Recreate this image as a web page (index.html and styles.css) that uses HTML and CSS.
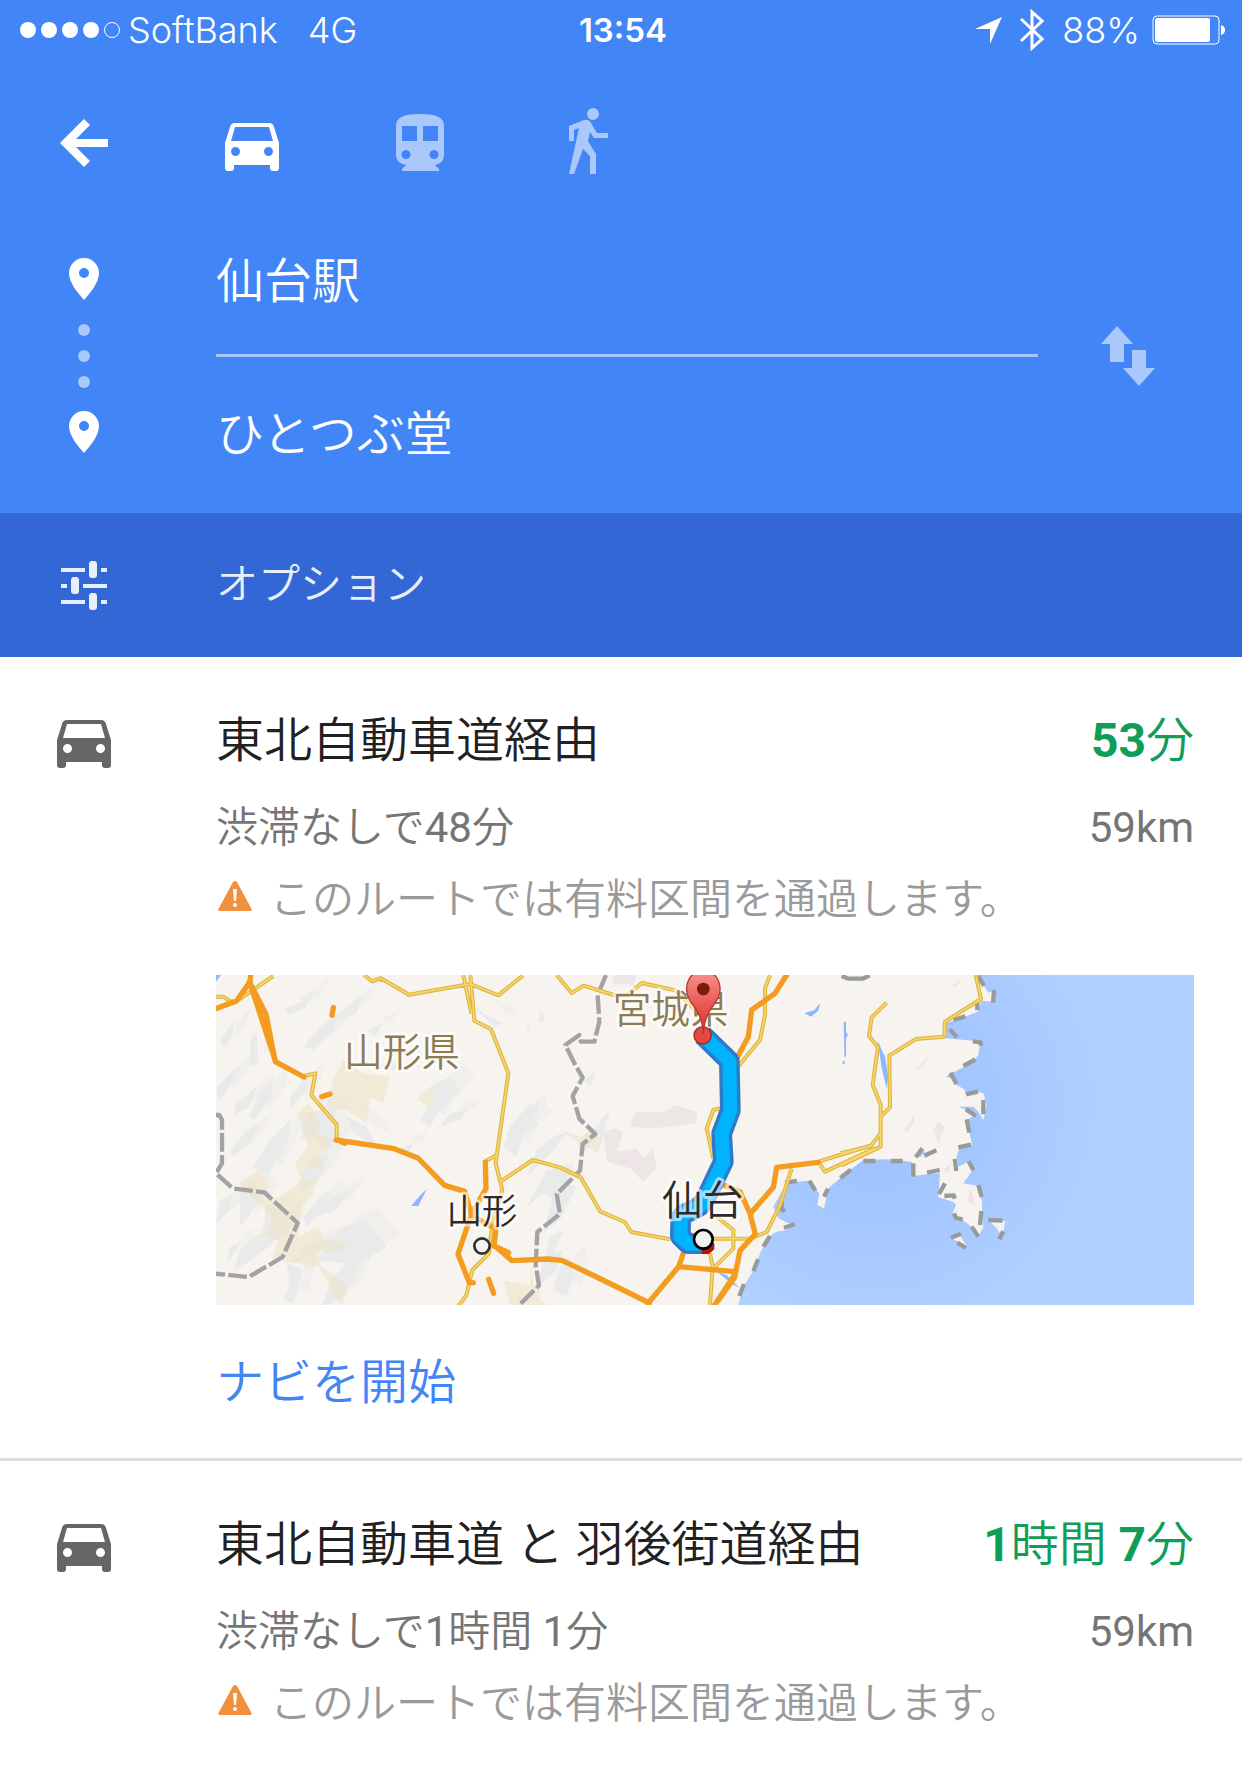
FILE: index.html
```html
<!DOCTYPE html>
<html lang="ja">
<head>
    <meta charset="UTF-8">
    <meta name="viewport" content="width=device-width, initial-scale=1.0">
    <title>ルート検索</title>
    <link rel="stylesheet" href="styles.css">
</head>
<body>

    <svg class="symbols" aria-hidden="true">
        <symbol id="car" viewBox="0 0 54 48">
            <path fill-rule="evenodd" d="M10 0h34q4 0 5 4l5 16v25q0 3-3 3h-3q-3 0-3-3v-3H9v3q0 3-3 3H3q-3 0-3-3V20L5 4q1-4 5-4zM10 4L6 18h42L44 4zM10.500 24a4.500 4.500 0 1 0 0 9a4.500 4.500 0 1 0 0-9zM43.500 24a4.500 4.500 0 1 0 0 9a4.500 4.500 0 1 0 0-9z"/>
        </symbol>
        <symbol id="pin" viewBox="0 0 30 42">
            <path fill-rule="evenodd" d="M15 0a15 15 0 0 1 15 15c0 10-9 20-15 27C9 35 0 25 0 15A15 15 0 0 1 15 0zm0 10a5 5 0 1 0 0 10a5 5 0 1 0 0-10z"/>
        </symbol>
        <symbol id="warning" viewBox="0 0 34 30">
            <path fill="#f0903f" d="M15 1q2-2 4 0l14 26q2 3-1 3H2q-3 0-1-3z"/>
            <path fill="#fff" d="M15 8h4l-1 12h-2z"/>
            <circle fill="#fff" cx="17" cy="24" r="2"/>
        </symbol>
    </svg>

    <header class="header">
        <div class="status-bar">
            <div class="status-left">
                <span class="signal"><i></i><i></i><i></i><i></i><i class="empty"></i></span>
                <span>SoftBank</span>
                <span class="network">4G</span>
            </div>
            <div class="clock">13:54</div>
            <div class="status-right">
                <svg width="27" height="27" viewBox="0 0 27 27"><path d="M27 0L15 27V12H0z"/></svg>
                <svg class="bluetooth" width="24" height="42" viewBox="0 0 24 42"><path d="M1 10l21 20-10 9V3l10 9L1 32"/></svg>
                <span class="battery">
                    88%
                    <svg width="74" height="30" viewBox="0 0 74 30">
                        <rect x="1" y="1" width="66" height="28" rx="4" fill="none" stroke="#fff"/>
                        <rect x="3" y="3" width="55" height="24" rx="2"/>
                        <path d="M69 10q4 1 4 5t-4 5z"/>
                    </svg>
                </span>
            </div>
        </div>

        <nav class="toolbar">
            <button type="button" aria-label="戻る">
                <svg width="48" height="66" viewBox="0 -11 48 66"><path d="M24 0l6 6-14 14h32v8H16l14 14-6 6L0 24z"/></svg>
            </button>
            <button type="button" aria-label="車">
                <svg width="54" height="66" viewBox="0 -15 54 66"><use href="#car" width="54" height="48"/></svg>
            </button>
            <button type="button" class="inactive" aria-label="電車">
                <svg width="48" height="66" viewBox="0 -6 48 66"><path fill-rule="evenodd" d="M0 12C0 3 8 0 24 0s24 3 24 12v29q0 8-9 10l4 4v2H6v-2l4-4Q0 49 0 41zM6 12v15h15V12zM27 12v15h15V12zM10 36a4.500 4.500 0 1 0 0 9a4.500 4.500 0 1 0 0-9zM38 36a4.500 4.500 0 1 0 0 9a4.500 4.500 0 1 0 0-9z"/></svg>
            </button>
            <button type="button" class="inactive" aria-label="徒歩">
                <svg width="39" height="66" viewBox="0 0 39 66"><circle cx="24" cy="6" r="6"/><path d="M0 18l15-6q5-1 7 3l6 10h11v5H25l-4-6-2 9 8 13v20h-6V48l-7-7-9 25H0l10-46-5 2v11H0z"/></svg>
            </button>
        </nav>

        <div class="places">
            <div class="markers">
                <svg width="30" height="42"><use href="#pin"/></svg>
                <span class="dots"><i></i><i></i><i></i></span>
                <svg width="30" height="42"><use href="#pin"/></svg>
            </div>
            <div class="fields">
                <input type="text" class="origin" aria-label="出発地" value="仙台駅">
                <input type="text" class="destination" aria-label="目的地" value="ひとつぶ堂">
            </div>
            <button type="button" class="swap" aria-label="入れ替え">
                <svg width="54" height="60" viewBox="0 0 54 60"><path d="M16 0l16 18h-9v18H9V18H0zM31 24h14v18h9L38 60 22 42h9z"/></svg>
            </button>
        </div>
    </header>

    <button type="button" class="options">
        <svg width="46" height="50" viewBox="0 0 46 50">
            <path d="M0 7h24v4H0zM40 7h6v4h-6zM0 23h6v4H0zM22 23h24v4H22zM0 39h24v4H0zM40 39h6v4h-6z"/>
            <rect x="28" y="0" width="8" height="17" rx="3"/>
            <rect x="10" y="16" width="8" height="17" rx="3"/>
            <rect x="28" y="32" width="8" height="17" rx="3"/>
        </svg>
        <span>オプション</span>
    </button>

    <main>
        <article class="route">
            <svg class="route-icon" width="54" height="48"><use href="#car"/></svg>
            <div class="route-body">
                <div class="row title-row">
                    <h2>東北自動車道経由</h2>
                    <p class="time"><b>53</b>分</p>
                </div>
                <div class="row detail-row">
                    <p>渋滞なしで<span>48</span>分</p>
                    <p><span>59km</span></p>
                </div>
                <p class="warning"><svg width="34" height="30"><use href="#warning"/></svg>このルートでは有料区間を通過します。</p>

                <svg class="map" viewBox="18 15 2934 990" role="img" aria-label="地図">
                    <defs>
                        <radialGradient id="sea" gradientUnits="userSpaceOnUse" cx="2000" cy="400" r="700">
                            <stop offset="0" stop-color="#9cc0ff"/>
                            <stop offset=".5" stop-color="#a5c7ff"/>
                            <stop offset="1" stop-color="#b0d0ff"/>
                        </radialGradient>
                        <linearGradient id="red" x1="0" y1="0" x2="0" y2="1">
                            <stop offset="0" stop-color="#f59490"/>
                            <stop offset=".6" stop-color="#e8524c"/>
                            <stop offset="1" stop-color="#d63a32"/>
                        </linearGradient>
                    </defs>

                    <!-- sea and land -->
                    <rect x="18" y="15" width="2934" height="990" fill="url(#sea)"/>
                    <path class="land" d="M18 15L2300 15 2322 48 2335 68 2352 62 2348 95 2315 92 2302 125 2265 140 2230 152 2205 160 2208 205 2240 208 2290 212 2310 222 2305 255 2290 275 2260 292 2235 305 2220 310 2208 320 2225 325 2240 345 2262 358 2268 372 2305 366 2320 370 2330 405 2320 450 2305 425 2290 410 2248 410 2268 420 2295 435 2270 450 2278 485 2286 525 2250 530 2240 560 2245 590 2275 575 2290 598 2260 640 2305 648 2315 690 2320 770 2305 800 2285 770 2255 748 2228 728 2238 705 2230 695 2185 682 2190 610 2160 612 2108 618 2105 575 2030 568 1960 570 1920 600 1890 625 1855 655 1842 715 1822 705 1828 670 1810 650 1798 632 1760 635 1725 645 1718 660 1690 710 1705 745 1725 755 1750 765 1730 780 1700 785 1675 800 1650 850 1635 890 1625 910 1600 950 1585 1005 18 1005zM2340 755l45-3-7 50-18-27zM2225 805l25-10 22 37z"/>
                    <path fill="#a2c4ff" d="M2118 555l15-20 12 12-15 15z"/>

                    <!-- mountains -->
                    <path id="hills" class="shade" d="M30 210l45-60-10 55-25 30zM120 210l20-25 5 90-25 15zM20 350l50-50 20-10-30 60-35 45zM80 400l60-50-20 60-50 25zM150 370l40-50-5 60-50 70-20-10zM60 540l50-60 40-20-30 60-50 40zM170 520l70-70-5 60-60 60-35 10zM225 115l50-20 40-40-30 60-50 20zM330 170l60-40-20 50-60 60-30-10zM400 120l60-50-20 60-50 20zM470 180l50-20-25 40zM490 290l60-20 40 10-40 20zM240 380l60-80-10 60-50 60zM290 430l90-20-20 60 40 20-50 60-40-50-40 10zM410 440l60 30 30 60-70-40zM680 340l40-20 30 40-60 60-30 50-30-20 30-50zM720 430l50-10-20 30-60 20zM790 110l30 20 60 30-30 10zM900 470l60-70 10 50 20 10-50 30-20 70-40-30zM560 540l50-20-20 40zM130 590l50-70 40 20-50 80zM90 660l40-30 30 50-70 90zM170 700l60 30 10 50-90 60 10-60zM300 570l60-20-30 70-50 50-20-20zM280 740l50-60 30-20-20 60-50 50zM350 690l70-30-40 60-60 20zM400 770l60-20 70 80-80 50-50 100-70 40 40-100 40-40-90-10zM280 830l90-30-40 50-80 30zM230 880l50 20-30 100-30-10 20-50zM130 800l80-30-20 50-80 60-40 20 20-60zM30 690l40-20-10 50-40 40zM60 830l40-20-50 70zM950 180l10-20-5 40zM1050 890l30-30 10 60-20 60-40-20z"/>
                    <use href="#hills" class="far" transform="translate(44 -36)"/>
                    <path class="shade" d="M960 410l30-20-10 60zM980 540l50-40 50-20-50 60-60 60-20 20zM1010 600l80-20-20 70-40 40-30-20-50 40zM1100 520l70-60 10 20-60 70zM1040 630l60 20-50 100-50 40zM1020 800l40-20-30 70 30-10-20 60-60 50zM1170 450l30-30-30 110zM1120 330l40-30-20 50zM990 120l15 30-20 10z"/>
                    <path class="sand" d="M370 330l30-60 60 40 80 10-20 80-40-20-10 80-60-40-60-10zM620 385l60-50-20 80zM265 430l30-30 35 50-10 40 50 20-40 50 5 40-40-10-20 40-20-50 40-50zM85 640l60-40 30 50-20 40 60-10 60-50 50-10-20 60-30 30-10 90 60-30 20 40 70 10-40 30-60-10 20 50 80 60-20 60-70-120-60-10-80-10 20-60-40-10 20-60zM880 930l110 25v50H900zM1050 480l60 20 30-20 35 25-10 45-70-40zM960 890l20 100 40 15h-60z"/>
                    <path class="town" d="M1210 15l70 0-10 30-60-5zM1275 425l90 0 30-20 65 20 0 35-80 10-60 5-60-5zM1180 490l30-15 30 10-20 60 60-10 20 30 30-30 10 60-40 40-40-40-70-20zM2115 300l30-30 10-20-5 25-30 25zM2080 485l30-50 3 20-20 30zM2170 480l15-25 20 15-20 50zM2270 695l12-40 15 50zM2200 600l25-20-10 30zM2225 45l30-15-20 22z"/>

                    <!-- lakes -->
                    <path class="water" d="M603 708l28-32 20-20-26 52zM1783 130l30-10 18-22-6 24-22 18zM1901 155l7 0 0 30 6 10-6 10 0 55-5 0zM1898 272h6v10h-6zM2003 210l12 30 10 20 10 60-5 35-15-60zM18 15h15l-15 20zM500 32h25l10 8zM1520 905l30 10 30 30 8 10-30-20z"/>

                    <!-- prefecture border and coast -->
                    <path class="border" d="M18 435h10l8 15v130l-18 30 50 45 95 12 100 92-45 102-102 60-100-10M1188 15l-25 60 5 80-15 60h-40l-5-20-42 30 30 60 22 38-30 55 20 68 48 46-38 30-8 80-70 70 10 60-68 54-5 100 10 60-60 60"/>
                    <path class="coast" d="M1895 18l20 8h44l20-10M2305 18l17 30M2352 60l-3 38M2302 95v25M2230 150l36-11M2219 178l22 24M2288 214l24 3v10M2260 288l36-20M2222 308l17 34M2268 373l36-8M2320 390v43M2268 418l30 20M2270 448l8 40M2245 532l38-8M2117 562l20-27M2143 557l36-16M2234 567l5 36M2276 574l14 27M2110 580v40M2151 608l38-8M2187 672l18-32M2203 678l28-2 4 10M2305 645l10 36M2232 730l6 14 20 4M2310 765l4-42M2285 770l20 30M2335 750l43 2M2380 784l-12 24M2223 803l30-12M2242 818l26 16M1960 573h36M2042 573h36M1891 624l32-25M1725 638l36-5M1798 632l18 30M1715 694v24l10 6M1722 774l32-12M1660 830l20-32M1630 904l14-36M1588 978l14-36M1842 680l12-24"/>

                    <!-- minor roads -->
                    <g class="minor">
                        <path id="r1" d="M18 80h22l30 20 120-82M282 318l34-8-12 66 76 88v46M462 15l25 19 24-10 86 50 184-32 84 34 74-60M760 15l24 115M781 15l12 137 50 26 52 132-38 270 20 80-30 100-10 90-50 50-18 76-26 35"/>
                        <path id="r2" d="M828 572l35-18M870 636l98-66 82 22 62 30 58 102 74 32 20 30 116 22M1040 15l45 54 36-22 90 28h40l45-36 100 22 60 60M1680 15l-15 40v80l-15 75-70 85M1535 415l-25 5-20 56 20 90M1520 740l50 40v55l-60 60M1510 806h110l50-20 40-80 35-110M1500 850l8 40-8 115M1825 575l20 30 150-70M1890 555l92-28M1825 575l65-20"/>
                        <path id="r3" d="M2030 98l-45 44-8 56 27 34-16 112 24 60v86l-30 38-92 22M2297 15l16 72-108 68-2 45-85 7-80 50 2 155-28 28v90l-118 56"/>
                    </g>
                    <g class="minor-inner">
                        <use href="#r1"/><use href="#r2"/><use href="#r3"/>
                    </g>

                    <!-- main roads -->
                    <path class="major" d="M122 15l-2 20-40 57-62 24M118 35l50 98 28 142 86 46M120 40l76 232M370 112l-4 24M335 380l25-8M378 510l174 26 72 28 80 82 60 18 20 70-40 118 34 86h12M404 520l-20-10M826 576l2 80-46 80 76 40-6 50 54 46 106-5 44 4 104 50 158 78M852 828l44 20M836 928l15 42M1730 15l-35 55-70 50-10 80-45 85M1825 577l-125 15-10 60-70 80 16 60-46 50-16 80-50 70M1540 645l50 20 32 70M1420 850l-14 40-92 110M1406 890l170 15M1574 914l-60 91"/>

                    <text class="pref" x="402" y="288">山形県</text>
                    <text class="pref" x="1208" y="158">宮城県</text>

                    <!-- route line -->
                    <path class="line-edge" d="M1478 195l80 78 3 148-26 70 5 84-50 105q-16 34-52 45-26 8-26 30l-1 44 23 22h56"/>
                    <path class="line" d="M1478 195l80 78 3 148-26 70 5 84-50 105q-16 34-52 45-26 8-26 30l-1 44 23 22h56"/>

                    <text class="city" x="710" y="763">山形</text>
                    <text class="city big" x="1356" y="735">仙台</text>

                    <path fill="#b5120c" d="M1475 820h38v18l-16 14h-22z"/>
                    <circle cx="816" cy="828" r="23" fill="#f5f3f0" stroke="#2b3030" stroke-width="8"/>
                    <circle cx="1480" cy="808" r="28" fill="#f2f2f2" stroke="#000" stroke-width="8"/>
                    <circle cx="1478" cy="196" r="26" fill="#e04a43" stroke="#a5281f" stroke-width="4"/>
                    <path fill="url(#red)" stroke="#b5352e" stroke-width="4" d="M1480 190c-3-50-20-70-38-95-28-45-3-93 38-93s66 48 38 93c-18 25-35 45-38 95z"/>
                    <circle cx="1480" cy="57" r="19" fill="#7e1a10"/>
                </svg>

                <a href="#" class="start">ナビを開始</a>
            </div>
        </article>

        <article class="route">
            <svg class="route-icon" width="54" height="48"><use href="#car"/></svg>
            <div class="route-body">
                <div class="row title-row">
                    <h2>東北自動車道 と 羽後街道経由</h2>
                    <p class="time"><b>1</b>時間 <b>7</b>分</p>
                </div>
                <div class="row detail-row">
                    <p>渋滞なしで<span>1</span>時間 <span>1</span>分</p>
                    <p><span>59km</span></p>
                </div>
                <p class="warning"><svg width="34" height="30"><use href="#warning"/></svg>このルートでは有料区間を通過します。</p>
            </div>
        </article>
    </main>

</body>
</html>
```
FILE: styles.css
```css
* {
    box-sizing: border-box;
}

body {
    margin: 0;
    background-color: #fff;
    color: #212121;
    font-family: Roboto, "Noto Sans CJK JP", sans-serif;
    font-weight: 350;
}

h2,
p {
    margin: 0;
    font-weight: 350;
}

svg {
    display: block;
    flex-shrink: 0;
}

button {
    padding: 0;
    border: none;
    background: none;
    color: inherit;
    font: inherit;
    cursor: pointer;
}

.symbols {
    position: absolute;
    width: 0;
    height: 0;
}

/* Header */
.header {
    background-color: #4285f6;
    color: #fff;
    fill: #fff;
}

.status-bar {
    display: grid;
    grid-template-columns: 1fr auto 1fr;
    align-items: center;
    height: 60px;
    padding: 0 16px 0 20px;
    font-family: Inter, "Liberation Sans", sans-serif;
    font-size: 36px;
    font-weight: 300;
}

.status-left,
.status-right,
.battery {
    display: flex;
    align-items: center;
}

.status-right {
    justify-content: flex-end;
    gap: 18px;
}

.battery {
    gap: 12px;
}

.signal {
    display: flex;
    gap: 5px;
    margin-right: 8px;
}

.signal i {
    width: 16px;
    height: 16px;
    border-radius: 50%;
    background-color: #fff;
}

.signal .empty {
    border: 1px solid #fff;
    background: none;
}

.network {
    margin-left: 30px;
}

.clock {
    font-size: 33px;
    font-weight: 600;
}

.bluetooth {
    fill: none;
    stroke: #fff;
    stroke-width: 3;
}

.toolbar {
    display: flex;
    height: 162px;
}

.toolbar button {
    display: flex;
    align-items: center;
    justify-content: center;
    width: 168px;
}

.inactive svg,
.swap svg {
    opacity: 0.55;
}

.places {
    display: grid;
    grid-template-columns: 168px 1fr 204px;
    padding: 6px 0 30px;
}

.markers {
    display: flex;
    flex-direction: column;
    align-items: center;
    justify-content: space-between;
    padding: 30px 0;
}

.dots {
    display: flex;
    flex-direction: column;
    gap: 14px;
}

.dots i {
    width: 12px;
    height: 12px;
    border-radius: 50%;
    background-color: #a9c8fb;
}

.fields {
    display: flex;
    flex-direction: column;
    gap: 24px;
    padding-left: 48px;
}

.fields input {
    width: 100%;
    height: 102px;
    padding: 0 0 4px;
    border: none;
    background: none;
    color: #fff;
    font: inherit;
    font-size: 48px;
    outline: none;
}

.fields .origin {
    height: 129px;
    padding-bottom: 28px;
    border-bottom: 3px solid #a6c5fb;
}

.swap {
    display: flex;
    align-items: center;
    justify-content: center;
    padding-right: 24px;
}

/* Options */
.options {
    display: flex;
    align-items: center;
    gap: 109px;
    width: 100%;
    height: 144px;
    padding: 2px 0 0 61px;
    background-color: #3367d6;
    color: #e8eefb;
    fill: #e8eefb;
    font-size: 42px;
}

.options span {
    padding-bottom: 12px;
}

/* Routes */
.route {
    display: grid;
    grid-template-columns: 168px 1fr;
    padding: 51px 48px 0 0;
}

.route + .route {
    border-top: 3px solid #ddd;
}

.route-icon {
    margin: 12px auto 0;
    fill: #666;
}

.route-body {
    padding-left: 48px;
}

.row {
    display: flex;
    justify-content: space-between;
}

.title-row,
.title-row h2 {
    font-size: 48px;
    line-height: 66px;
}

.time {
    color: #0f9d58;
}

.time b {
    font-weight: 700;
}

.detail-row {
    margin-top: 24px;
    color: #757575;
    font-size: 42px;
    line-height: 60px;
}

.detail-row span {
    font-weight: 400;
}

.warning {
    display: flex;
    align-items: center;
    gap: 18px;
    margin-top: 12px;
    padding-left: 2px;
    color: #9a9a9a;
    font-size: 42px;
    line-height: 60px;
}

.warning svg {
    margin-bottom: 8px;
}

.start {
    display: inline-block;
    padding: 48px 0 45px;
    color: #4285f4;
    font-size: 48px;
    line-height: 60px;
    text-decoration: none;
}

/* Map */
.map {
    width: 100%;
    height: auto;
    margin-top: 45px;
    stroke-linejoin: round;
}

.land {
    fill: #f7f4ef;
}

.shade {
    fill: #e9eaea;
}

.far {
    opacity: 0.5;
}

.sand {
    fill: #ece3c6;
    opacity: 0.6;
}

.town {
    fill: #eee6e6;
}

.water {
    fill: #8fb7ff;
}

.border,
.coast {
    fill: none;
    stroke: #a3a3a5;
    stroke-width: 13;
}

.border {
    stroke-dasharray: 56 10;
}

.coast {
    stroke: #979b99;
}

.minor {
    fill: none;
    stroke: #dfb43f;
    stroke-width: 12;
}

.minor-inner {
    fill: none;
    stroke: #f7d76c;
    stroke-width: 5;
}

.major {
    fill: none;
    stroke: #f39c1f;
    stroke-width: 16;
    stroke-linecap: round;
}

.line-edge {
    fill: none;
    stroke: #3079c6;
    stroke-width: 62;
}

.line {
    fill: none;
    stroke: #00b3fd;
    stroke-width: 42;
}

.map text {
    font-size: 116px;
    font-weight: 350;
    stroke: rgba(255, 255, 255, 0.6);
    stroke-width: 18px;
    paint-order: stroke;
}

.pref {
    fill: #8d7c53;
}

.map .city {
    fill: #2a2a2a;
    font-size: 106px;
}

.map .big {
    font-size: 122px;
}
```
